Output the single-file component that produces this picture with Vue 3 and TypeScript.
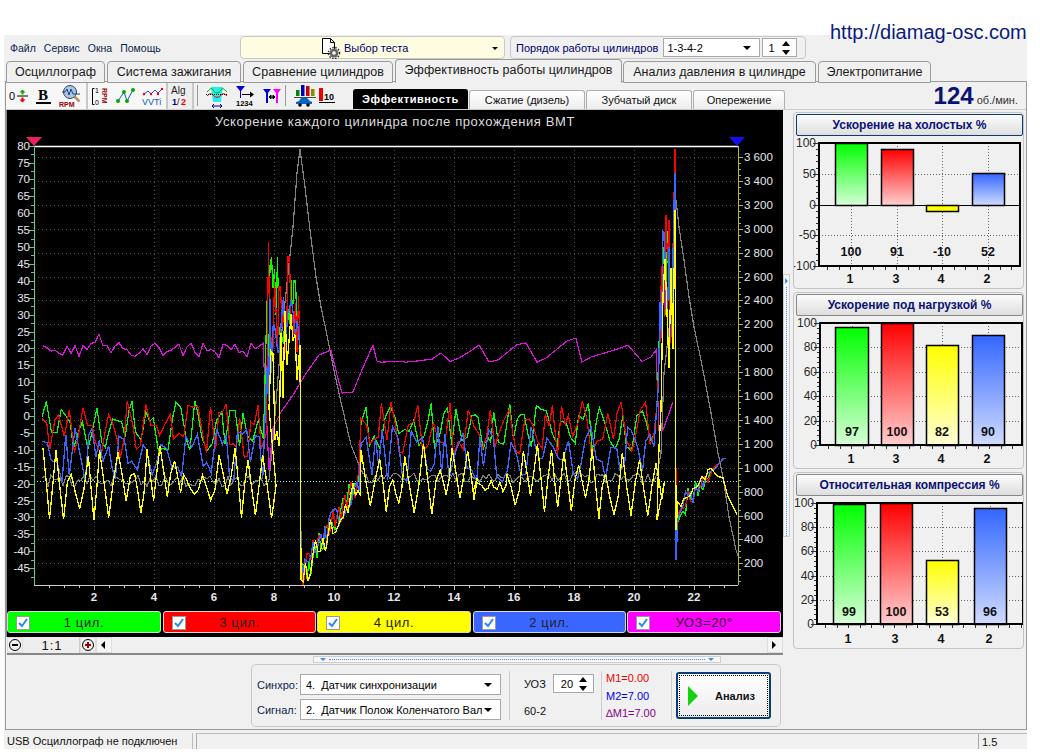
<template>
  <div class="app">
    <a class="url">http://diamag-osc.com</a>
    <div class="window">
      <div class="topbar">
        <div class="menu">
          <span v-for="m in menu" :key="m">{{ m }}</span>
        </div>
        <div class="test-select">
          <svg class="test-icon" width="22" height="22" viewBox="0 0 22 22">
            <path d="M2.500 1.500h8l4 4v11h-12z" fill="#fff" stroke="#000" />
            <path d="M10.500 1.500v4h4" fill="none" stroke="#000" />
            <circle cx="14" cy="16" r="4.500" fill="#666" />
            <circle cx="14" cy="16" r="5.600" fill="none" stroke="#333" stroke-width="1.400" stroke-dasharray="1.500 1.500" />
            <circle cx="14" cy="16" r="1.800" fill="#fff" />
          </svg>
          <span>Выбор теста</span>
          <i class="caret small"></i>
        </div>
        <div class="order">
          <span>Порядок работы цилиндров</span>
          <div class="combo order-combo">1-3-4-2<i class="caret"></i></div>
          <div class="combo spin-box">1
            <svg width="10" height="16" viewBox="0 0 10 16"><path d="M5 1l4 5H1zM5 15l4-5H1z" fill="#000" /></svg>
          </div>
        </div>
      </div>

      <div class="tabs">
        <div v-for="t in tabs" :key="t" class="tab" :class="{ active: t === activeTab }">{{ t }}</div>
      </div>

      <div class="content">
        <div class="toolbar">
          <div class="tool-group g1">
            <svg width="20" height="20" viewBox="0 0 20 20">
              <text x="0" y="14" class="ic-t" font-size="11" fill="#000">0</text>
              <path d="M8 10h11" stroke="#000" />
              <path d="M13.500 3.500l3 3h-2v2h-2v-2h-2z" fill="#0a0" />
              <path d="M13.500 16.500l3-3h-2v-2h-2v2h-2z" fill="#e00" />
            </svg>
            <svg width="20" height="20" viewBox="0 0 20 20">
              <text x="4" y="14" class="ic-b" font-size="15" fill="#000">B</text>
              <path d="M2 17h15" stroke="#000" stroke-width="2" />
            </svg>
            <svg width="24" height="24" viewBox="0 0 24 24">
              <circle cx="11" cy="8" r="6.500" fill="#a9c6e8" stroke="#345" />
              <path d="M3 8h3l2-3 2 6 2-6 2 5h7" fill="none" stroke="#247" />
              <path d="M15.500 12.500l5 5" stroke="#b8965a" stroke-width="2.500" />
              <text x="0" y="23" class="ic-t" font-size="7" fill="#900" font-weight="700">RPM</text>
            </svg>
          </div>
          <div class="tool-group g2">
            <svg width="20" height="24" viewBox="0 0 20 24">
              <path d="M4.500 4.500h-2v16h2" fill="none" stroke="#000" />
              <text x="5" y="9" class="ic-t" font-size="7" fill="#000">1</text>
              <text x="5" y="21" class="ic-t" font-size="7" fill="#000">0</text>
              <text x="0" y="0" transform="translate(12 4) rotate(90)" class="ic-t" font-size="7" fill="#900" font-weight="700">RPM</text>
            </svg>
            <svg width="22" height="20" viewBox="0 0 22 20">
              <path d="M3 15l6-9 3 9 6-11" fill="none" stroke="#15c" />
              <circle cx="3" cy="15" r="2" fill="#0a0" /><circle cx="9" cy="6" r="2" fill="#0a0" />
              <circle cx="12" cy="15" r="2" fill="#0a0" /><circle cx="18" cy="4" r="2" fill="#0a0" />
            </svg>
            <svg width="22" height="24" viewBox="0 0 22 24">
              <path d="M1 9l5-4 3 3 4-4 3 3 4-4" transform="translate(0 2)" fill="none" stroke="#15c" />
              <circle cx="2" cy="10" r="1.200" fill="#e00" /><circle cx="9" cy="10" r="1.200" fill="#e00" />
              <circle cx="16" cy="10" r="1.200" fill="#e00" /><circle cx="20" cy="5" r="1.200" fill="#e00" />
              <text x="0" y="21" class="ic-t" font-size="9" fill="#15c">VVTi</text>
            </svg>
          </div>
          <div class="tool-group g3">
            <svg width="20" height="26" viewBox="0 0 20 26">
              <text x="1" y="11" class="ic-t" font-size="10" fill="#222">Alg</text>
              <text x="2" y="22" class="ic-t" font-size="9" fill="#008" font-weight="700">1</text>
              <text x="7" y="22" class="ic-t" font-size="9" fill="#222">/</text>
              <text x="11" y="22" class="ic-t" font-size="9" fill="#e00" font-weight="700">2</text>
            </svg>
          </div>
          <i class="tool-sep"></i>
          <div class="tool-group g4">
            <svg width="22" height="24" viewBox="0 0 22 24">
              <path d="M5 3h12l-2 15H7z" fill="#2ee" />
              <path d="M1 8c3-3 4-5 6-2 2 4 6 4 8 0 1-3 3-1 6 2" fill="none" stroke="#0a0" />
              <path d="M1 12c3-3 4-3 6-1 2 3 6 3 8 0 2-2 3-2 6 1" fill="none" stroke="#e00" />
              <path d="M0 10.500h22" stroke="#000" stroke-dasharray="1 1" />
              <path d="M6 22h10M6 22l2-2M6 22l2 2M16 22l-2-2M16 22l-2 2" stroke="#008" fill="none" />
            </svg>
            <svg width="20" height="24" viewBox="0 0 20 24">
              <path d="M1 2h9L6 7v7H5V7z" fill="#00d" />
              <path d="M7 10.500h9" stroke="#000" /><path d="M19 10.500l-4-3v6z" fill="#000" />
              <text x="1" y="22" class="ic-t" font-size="7.500" fill="#000" font-weight="700">1234</text>
            </svg>
            <svg width="20" height="20" viewBox="0 0 20 20">
              <path d="M1 3h8L6 7v10H4V7z" fill="#00d" />
              <path d="M11 3h8l-3 4v10h-2V7z" fill="#f0f" />
              <path d="M7 11h6M7 11l2-2v4zM13 11l-2-2v4z" stroke="#000" fill="#000" />
            </svg>
          </div>
          <i class="tool-sep"></i>
          <div class="tool-group g5">
            <svg width="22" height="24" viewBox="0 0 22 24">
              <rect x="2" y="6" width="3.500" height="6" fill="#080" /><rect x="7" y="1" width="3.500" height="11" fill="#00b" />
              <rect x="12" y="2" width="3.500" height="10" fill="#c00" /><rect x="17" y="5" width="3.500" height="7" fill="#880" />
              <path d="M0 13.500h22" stroke="#444" />
              <path d="M2 20v-2l3-1 2-3h6l3 3 2 1v2z" fill="#06c" />
              <circle cx="6" cy="21" r="1.800" fill="#000" /><circle cx="14" cy="21" r="1.800" fill="#000" />
            </svg>
            <svg width="18" height="20" viewBox="0 0 18 20">
              <rect x="1" y="2" width="4" height="13" fill="#e00" />
              <path d="M1 16.500h16" stroke="#000" />
              <text x="6" y="14" class="ic-t" font-size="9" fill="#000" font-weight="700">10</text>
            </svg>
          </div>
          <div class="subtabs">
            <div v-for="s in subTabs" :key="s" class="subtab" :class="{ active: s === activeSub }">{{ s }}</div>
          </div>
          <div class="rpm"><b>124</b><span>об./мин.</span></div>
        </div>

        <div class="main">
          <div class="left">
            <div class="scope">
              <svg class="scope-svg" width="776" height="501" viewBox="6 110 776 501">
                <text x="394" y="126" text-anchor="middle" class="scope-title">Ускорение каждого цилиндра после прохождения ВМТ</text>
                <path v-for="g in hGrid" :key="'h' + g" :d="`M33 ${g}.5H737`" class="grid" />
                <path v-for="g in vGrid" :key="'v' + g" :d="`M${g}.5 146V585`" class="grid" />
                <path d="M33 481.500H737" stroke="#8ff" stroke-dasharray="1 2" />
                <polyline v-for="t in traces" :key="t.color" :points="t.points" :stroke="t.color" :stroke-width="t.width" fill="none" shape-rendering="crispEdges" />
                <path d="M33 146.500H737" stroke="#fff" stroke-width="1.500" />
                <path d="M33 585.500H737" stroke="#ccc" />
                <path d="M33.500 146V585" stroke="#5cc8a8" />
                <path d="M737.500 146V585" stroke="#b8b83c" />
                <path d="M25 137h16l-8 9z" fill="#ee1f60" />
                <path d="M728 137h16l-8 9z" fill="#1010f0" />
                <g v-for="l in leftAxis" :key="'l' + l.label">
                  <path :d="`M28 ${l.y}.5h5`" stroke="#5cc8a8" />
                  <text x="29" :y="l.y + 4" text-anchor="end" class="axis-t">{{ l.label }}</text>
                </g>
                <path v-for="m in leftMinor" :key="'lm' + m" :d="`M30 ${m}.5h3`" stroke="#5cc8a8" />
                <g v-for="r in rightAxis" :key="'r' + r.label">
                  <path :d="`M737 ${r.y}.5h5`" stroke="#b8b83c" />
                  <text x="743" :y="r.y + 4" class="axis-t">{{ r.label }}</text>
                </g>
                <path v-for="m in rightMinor" :key="'rm' + m" :d="`M737 ${m}.5h3`" stroke="#b8b83c" />
                <g v-for="b in bottomAxis" :key="'b' + b.label">
                  <path :d="`M${b.x}.5 585v5`" stroke="#ccc" />
                  <text :x="b.x" y="601" text-anchor="middle" class="axis-t bold">{{ b.label }}</text>
                </g>
                <path v-for="m in bottomMinor" :key="'bm' + m" :d="`M${m}.5 585v3`" stroke="#ccc" />
              </svg>
              <div class="legend">
                <div v-for="c in legend" :key="c.label" class="legend-item" :class="c.cls">
                  <span class="check">
                    <svg width="10" height="10" viewBox="0 0 10 10"><path d="M1 5l3 3 5-7" fill="none" stroke="#2b8ae8" stroke-width="2" /></svg>
                  </span>
                  <span class="legend-label">{{ c.label }}</span>
                </div>
              </div>
            </div>
            <div class="scrollrow">
              <span class="round-btn"><i class="minus"></i></span>
              <span class="ratio">1:1</span>
              <span class="round-btn"><i class="plus"></i></span>
              <span class="sb-btn"><i class="tri-l"></i></span>
              <span class="sb-track"></span>
              <span class="sb-btn"><i class="tri-r"></i></span>
            </div>
            <div class="h-strip">
              <i class="strip-arrow"></i><span class="dots"></span><i class="strip-arrow"></i>
            </div>
            <div class="controls">
              <div class="signals">
                <div class="sig-row">
                  <label>Синхро:</label>
                  <div class="combo sig-combo">4.&nbsp; Датчик синхронизации<i class="caret"></i></div>
                </div>
                <div class="sig-row">
                  <label>Сигнал:</label>
                  <div class="combo sig-combo">2.&nbsp; Датчик Полож Коленчатого Вал<i class="caret"></i></div>
                </div>
              </div>
              <div class="uoz">
                <div class="uoz-row">
                  <span>УОЗ</span>
                  <div class="combo uoz-spin">20
                    <svg width="10" height="14" viewBox="0 0 10 14"><path d="M5 0l4 5H1zM5 14l4-5H1z" fill="#000" /></svg>
                  </div>
                </div>
                <span class="gear">60-2</span>
              </div>
              <div class="marks">
                <span class="m1">M1=0.00</span>
                <span class="m2">M2=7.00</span>
                <span class="m3">∆M1=7.00</span>
              </div>
              <div class="analyze">
                <svg width="12" height="20" viewBox="0 0 12 20"><path d="M1 0l10 10L1 20z" fill="#14d114" /></svg>
                <b>Анализ</b>
              </div>
            </div>
          </div>

          <div class="v-strip"><i class="strip-arrow-r"></i><span class="v-dots"></span></div>

          <div class="right">
            <section v-for="p in panels" :key="p.title" class="panel">
              <div class="panel-head" :class="{ focus: p.focus }">{{ p.title }}</div>
              <svg width="231" height="151" viewBox="0 0 231 151">
                <defs>
                  <linearGradient v-for="b in p.bars" :id="gradId(p.id, b.name)" :key="b.name" x1="0" y1="0" x2="0" y2="1">
                    <stop offset="0" :stop-color="b.color" />
                    <stop offset="1" :stop-color="b.pale" />
                  </linearGradient>
                </defs>
                <path v-for="t in p.ticks" :key="'g' + t.y" :d="`M${p.x0} ${t.y}.5H${p.x1}`" :stroke="t.zero ? '#000' : '#666'" :stroke-dasharray="t.zero ? undefined : '1 2'" />
                <path v-for="b in p.bars" :key="'v' + b.name" :d="`M${b.cx}.5 ${p.y0}V${p.y1}`" stroke="#666" stroke-dasharray="1 2" />
                <rect v-for="b in p.bars" :key="'r' + b.name" :x="b.x + 0.5" :y="b.y + 0.5" :width="b.w" :height="b.h" :fill="`url(#${gradId(p.id, b.name)})`" stroke="#000" stroke-width="1.500" />
                <path v-for="t in p.ticks" :key="'t' + t.y" :d="`M${p.x0 - 6} ${t.y}.5h6`" stroke="#333" />
                <path v-for="m in p.minor" :key="'m' + m" :d="`M${p.x0 - 3} ${m}.5h3`" stroke="#333" />
                <path v-for="m in p.bottomTicks" :key="'bt' + m" :d="`M${m}.5 ${p.y1}v4`" stroke="#333" />
                <rect :x="p.x0" :y="p.y0" :width="p.x1 - p.x0" :height="p.y1 - p.y0" fill="none" stroke="#000" stroke-width="2" />
                <text v-for="t in p.ticks" :key="'l' + t.y" :x="p.x0 - 3" :y="t.y + 4" text-anchor="end" class="bar-axis">{{ t.label }}</text>
                <text v-for="b in p.bars" :key="'n' + b.name" :x="b.cx" :y="p.valueY" text-anchor="middle" class="bar-val">{{ b.value }}</text>
                <text v-for="b in p.bars" :key="'c' + b.name" :x="b.cx - 1" :y="p.nameY" text-anchor="middle" class="bar-val">{{ b.name }}</text>
              </svg>
            </section>
          </div>
        </div>
      </div>

      <div class="status">
        <span class="s1">USB Осциллограф не подключен</span>
        <span class="s2"></span>
        <span class="s3">1.5</span>
      </div>
    </div>
  </div>
</template>

<script setup lang="ts">
const menu = ['Файл', 'Сервис', 'Окна', 'Помощь']
const tabs = [
  'Осциллограф',
  'Система зажигания',
  'Сравнение цилиндров',
  'Эффективность работы цилиндров',
  'Анализ давления в цилиндре',
  'Электропитание'
]
const activeTab = tabs[3]
const subTabs = ['Эффективность', 'Сжатие (дизель)', 'Зубчатый диск', 'Опережение']
const activeSub = subTabs[0]

const legend = [
  { label: '1 цил.', cls: 'green' },
  { label: '3 цил.', cls: 'red' },
  { label: '4 цил.', cls: 'yellow' },
  { label: '2 цил.', cls: 'blue' },
  { label: 'УОЗ=20°', cls: 'magenta' }
]

// оси осциллограммы, в пикселях страницы
const yLeft = (v: number) => 416 - v * 3.38
const yRight = (v: number) => Math.round(157 + ((3600 - v) / 200) * 23.9)
const xAt = (t: number) => Math.round(33 + t * 30)

const leftAxis: { label: string; y: number }[] = []
const leftMinor: number[] = []
for (let v = 80; v >= -45; v -= 5) {
  leftAxis.push({ label: String(v), y: Math.round(yLeft(v)) })
  leftMinor.push(Math.round(yLeft(v - 2.5)))
}
const rightAxis: { label: string; y: number }[] = []
const rightMinor: number[] = []
for (let v = 3600; v >= 200; v -= 200) {
  const s = String(v)
  rightAxis.push({ label: v >= 1000 ? `${s[0]} ${s.slice(1)}` : s, y: yRight(v) })
  for (const d of [50, 100, 150]) rightMinor.push(yRight(v - d))
}
const hGrid = rightAxis.map((r) => r.y)
const bottomAxis: { label: string; x: number }[] = []
for (let t = 2; t <= 22; t += 2) bottomAxis.push({ label: String(t), x: xAt(t) })
const vGrid = bottomAxis.map((b) => b.x)
const bottomMinor: number[] = []
for (let t = 0.5; t < 23.5; t += 0.5) if (t % 2 !== 0) bottomMinor.push(xAt(t))

// псевдослучайный сигнал, чтобы кривая всегда была одной и той же
function rng(seed: number) {
  let s = seed
  return () => {
    s = (s * 1664525 + 1013904223) % 4294967296
    return s / 4294967296
  }
}

type Pt = [number, number]

const toPoints = (pts: Pt[]) => pts.map((p) => `${p[0].toFixed(1)},${p[1].toFixed(1)}`).join(' ')

// зигзаг вокруг базовой линии: неровные пики через 10-25 px
function baseline(r: () => number, pts: Pt[], from: number, to: number, base: number, amp: number) {
  let sign = 1
  let left = 2
  for (let x = from; x < to; x += 3 + r() * 3) {
    pts.push([x, yLeft(base + sign * amp * (0.1 + 0.9 * r()))])
    if (--left === 0) {
      sign = -sign
      left = 1 + Math.floor(r() * 3)
    }
  }
}

function cylinder(seed: number, base: number, amp: number, peak1: number, peak2: number, dip: number): string {
  const r = rng(seed)
  const pts: Pt[] = []
  baseline(r, pts, 41, 266, base, amp)
  for (let x = 266; x < 298; x += 1.5) {
    const low = x < 271 ? 0 : 18
    pts.push([x, yLeft(low + r() * (peak1 - low))])
  }
  pts.push([299, 350], [300, 560])
  for (let x = 302; x < 360; x += 2) {
    const up = (x - 302) / 58
    pts.push([x, 572 - up * 95 + (r() - 0.5) * (36 - up * 12)])
  }
  baseline(r, pts, 360, 656, base, amp)
  for (let x = 656; x < 673; x += 1.5) {
    const up = Math.min(1, (x - 656) / 5)
    pts.push([x, 405 - up * 60 - r() * up * 130])
  }
  pts.push([674, yLeft(peak2)], [675, dip])
  for (let x = 677; x < 726; x += 2.5) {
    const up = Math.min(1, (x - 677) / 46)
    pts.push([x, 512 - up * 54 + (r() - 0.5) * 34 * (1 - up) + (r() - 0.5) * 2])
  }
  return toPoints(pts)
}

function yellowTrace(): string {
  const r = rng(44)
  const pts: Pt[] = []
  const zigzag = (from: number, to: number) => {
    let x = from
    while (x < to) {
      const len = 11 + r() * 8
      const top = yLeft(-6 - r() * 13)
      const bottom = yLeft(-22 - r() * 9)
      pts.push([x, top], [x + len * 0.25, (top + bottom) / 2 + (r() - 0.5) * 6], [x + len * 0.5, bottom], [x + len * 0.75, (top + bottom) / 2 + (r() - 0.5) * 6])
      x += len
    }
  }
  zigzag(42, 268)
  for (let x = 268; x < 298; x += 2) pts.push([x, yLeft(r() * 30 + (x < 280 ? -10 : 5))])
  pts.push([299, 345], [300, 580])
  for (let x = 302; x < 360; x += 2.5) pts.push([x, 575 - ((x - 302) / 58) * 95 + (r() - 0.5) * 30])
  zigzag(360, 472)
  for (let x = 472; x < 506; x += 3) pts.push([x, 480 + r() * 12])
  zigzag(506, 656)
  for (let x = 656; x < 673; x += 2) pts.push([x, 520 - Math.min(1, (x - 656) / 6) * 270 * (0.5 + r() * 0.5)])
  pts.push([674, 210], [675, 530])
  for (let x = 677; x < 712; x += 3) pts.push([x, 508 - ((x - 677) / 35) * 44 + (r() - 0.5) * 14])
  pts.push([716, 476], [722, 478], [727, 497], [733, 508], [736, 515])
  return toPoints(pts)
}

function grayTrace(): string {
  const r = rng(9)
  const pts: Pt[] = []
  for (let x = 41; x < 266; x += 3) pts.push([x, 481 + (r() - 0.5) * 12])
  pts.push([268, 480], [272, 440], [280, 340], [292, 227], [296, 173], [299, 149])
  pts.push([304, 187], [309, 230], [315, 277], [320, 307], [327, 340], [334, 375], [340, 402], [350, 445], [360, 470])
  for (let x = 362; x < 658; x += 3) pts.push([x, 478 + (r() - 0.5) * 10])
  pts.push([660, 453], [663, 373], [668, 330], [675, 200], [678, 227], [683, 260], [688, 297], [693, 327], [702, 370], [710, 413], [717, 453], [722, 477], [728, 517], [735, 550], [737, 556])
  return toPoints(pts)
}

function magentaTrace(): string {
  const r = rng(23)
  const pts: Pt[] = []
  for (let x = 42; x < 266; x += 4) pts.push([x, 350 + (r() - 0.5) * 16 + (x > 90 && x < 100 ? -12 : 0)])
  pts.push([268, 470], [272, 428], [280, 412], [292, 395], [304, 375], [318, 355], [330, 350], [336, 375], [341, 393], [352, 392], [360, 372], [372, 345], [376, 361])
  for (let x = 380; x < 420; x += 5) pts.push([x, 362 + (r() - 0.5) * 2])
  const anchors: Pt[] = [[440, 353], [458, 358], [478, 345], [497, 360], [525, 343], [545, 358], [575, 338], [590, 357], [627, 345], [650, 357]]
  for (const a of anchors) pts.push([a[0] - 9, a[1] + 4 + (r() - 0.5) * 5], a)
  pts.push([655, 350], [658, 430], [662, 430], [672, 402])
  return toPoints(pts)
}

const traces = [
  { color: '#808080', width: 1.200, points: grayTrace() },
  { color: '#e010e0', width: 1.200, points: magentaTrace() },
  { color: '#00ff00', width: 1.200, points: cylinder(101, -3, 7.500, 49, 69, 505) },
  { color: '#ff0000', width: 1.200, points: cylinder(202, -4, 8.500, 52, 79, 500) },
  { color: '#3a66ff', width: 1.300, points: cylinder(303, -11, 8.500, 36, 72, 560) },
  { color: '#ffff00', width: 1.300, points: yellowTrace() }
]

// панели справа
interface BarIn { name: string; value: number; x: number; w: number }

const palette: Record<string, { color: string; pale: string }> = {
  '1': { color: '#00ff00', pale: '#d8ffd8' },
  '3': { color: '#ff0000', pale: '#ffd0d0' },
  '4': { color: '#ffff00', pale: '#ffffd8' },
  '2': { color: '#3366ff', pale: '#d0dcff' }
}

function makePanel(id: string, title: string, focus: boolean, cfg: {
  x0: number; x1: number; y0: number; y1: number; min: number; max: number; step: number;
  valueY: number; nameY: number; bars: BarIn[]
}) {
  const toY = (v: number) => cfg.y0 + ((cfg.max - v) / (cfg.max - cfg.min)) * (cfg.y1 - cfg.y0)
  const ticks: { y: number; label: number; zero: boolean }[] = []
  const minor: number[] = []
  for (let v = cfg.max; v >= cfg.min; v -= cfg.step) {
    ticks.push({ y: Math.round(toY(v)), label: v, zero: v === 0 && cfg.min < 0 })
    if (v > cfg.min) for (let k = 1; k < 5; k++) minor.push(Math.round(toY(v - (cfg.step * k) / 5)))
  }
  const bottomTicks: number[] = []
  for (let x = cfg.x0 + 8; x < cfg.x1; x += 11.5) bottomTicks.push(Math.round(x))
  const bars = cfg.bars.map((b) => {
    const top = toY(Math.min(100, Math.max(b.value, 0)))
    const bot = toY(b.value < 0 ? b.value : 0)
    return {
      ...b,
      ...palette[b.name],
      ...(b.value < 0 ? { pale: palette[b.name].color } : {}),
      cx: b.x + Math.round(b.w / 2),
      y: Math.round(top),
      h: Math.round(bot - top)
    }
  })
  return { id, title, focus, ...cfg, ticks, minor, bottomTicks, bars }
}

const panels = [
  makePanel('a', 'Ускорение на холостых %', true, {
    x0: 26, x1: 227, y0: 6, y1: 129, min: -100, max: 100, step: 50, valueY: 119, nameY: 146,
    bars: [
      { name: '1', value: 100, x: 42, w: 32 },
      { name: '3', value: 91, x: 88, w: 32 },
      { name: '4', value: -10, x: 133, w: 32 },
      { name: '2', value: 52, x: 179, w: 32 }
    ]
  }),
  makePanel('b', 'Ускорение под нагрузкой %', false, {
    x0: 27, x1: 229, y0: 6, y1: 128, min: 0, max: 100, step: 20, valueY: 119, nameY: 146,
    bars: [
      { name: '1', value: 97, x: 42, w: 33 },
      { name: '3', value: 100, x: 88, w: 32 },
      { name: '4', value: 82, x: 133, w: 32 },
      { name: '2', value: 90, x: 179, w: 32 }
    ]
  }),
  makePanel('c', 'Относительная компрессия %', false, {
    x0: 24, x1: 230, y0: 6, y1: 127, min: 0, max: 100, step: 20, valueY: 119, nameY: 146,
    bars: [
      { name: '1', value: 99, x: 40, w: 32 },
      { name: '3', value: 100, x: 87, w: 32 },
      { name: '4', value: 53, x: 133, w: 32 },
      { name: '2', value: 96, x: 181, w: 32 }
    ]
  })
]

const gradId = (panel: string, name: string) => `bar-${panel}-${name}`
</script>

<style>
html,
body {
  margin: 0;
  background: #fff;
  overflow: hidden;
}
</style>

<style scoped>
.app {
  position: relative;
  width: 1040px;
  height: 754px;
  padding: 35px 0 0 4px;
  box-sizing: border-box;
  background: #fff;
  font-family: "Liberation Sans", Arial, sans-serif;
  font-size: 11px;
  color: #000;
}

.url {
  position: absolute;
  left: 830px;
  top: 21px;
  font-size: 20px;
  color: #0a1a80;
}

.window {
  width: 1023px;
  height: 714px;
  background: #f0f0f0;
}

.topbar {
  display: flex;
  height: 24px;
  align-items: flex-start;
}

.menu {
  width: 236px;
  display: flex;
  gap: 8px;
  padding: 7px 0 0 6px;
  box-sizing: border-box;
  font-size: 10.500px;
  color: #0b1f4e;
}

.test-select {
  position: relative;
  width: 265px;
  height: 23px;
  margin-top: 1px;
  display: flex;
  align-items: center;
  padding-left: 79px;
  box-sizing: border-box;
  gap: 2px;
  background: #fffde1;
  border: 1px solid #c8c8c8;
  border-radius: 4px;
  color: #00006e;
}

.test-icon {
  flex: none;
}

.order {
  width: 296px;
  height: 23px;
  margin: 1px 0 0 5px;
  display: flex;
  align-items: center;
  gap: 5px;
  padding-left: 5px;
  box-sizing: border-box;
  border: 1px solid #c8c8c8;
  border-radius: 4px;
  color: #00006e;
}

.combo {
  position: relative;
  height: 19px;
  display: flex;
  align-items: center;
  padding-left: 3px;
  box-sizing: border-box;
  background: #fff;
  border: 1px solid #a8a8a8;
  color: #000;
  white-space: nowrap;
  overflow: hidden;
}

.caret {
  position: absolute;
  right: 8px;
  top: 50%;
  margin-top: -2px;
  width: 0;
  height: 0;
  border-left: 4px solid transparent;
  border-right: 4px solid transparent;
  border-top: 4px solid #000;
}

.caret.small {
  right: 6px;
  margin-top: -1px;
  border-width: 3px 3px 0;
}

.order-combo {
  width: 97px;
}

.spin-box {
  width: 35px;
  margin-left: -3px;
  justify-content: space-between;
  padding: 0 5px;
}

.tabs {
  display: grid;
  grid-template-columns: 99px 134px 150px 226px 193px 113px;
  padding-left: 2px;
  column-gap: 2px;
  height: 23px;
  align-items: end;
  position: relative;
  z-index: 1;
  margin-bottom: -1px;
}

.tab {
  height: 20px;
  line-height: 20px;
  text-align: center;
  font-size: 12.500px;
  letter-spacing: 0.050px;
  color: #1a1a1a;
  background: #f0f0f0;
  border: 1px solid #9a9a9a;
  border-radius: 4px 4px 0 0;
  box-sizing: content-box;
  white-space: nowrap;
}

.tab.active {
  height: 22px;
  line-height: 20px;
  margin-right: -1px;
  border-bottom-color: #f0f0f0;
}

.content {
  width: 1022px;
  height: 649px;
  margin-left: 1px;
  border: 1px solid #9a9a9a;
  box-sizing: border-box;
}

.toolbar {
  position: relative;
  display: flex;
  height: 28px;
  align-items: stretch;
  border-bottom: 1px solid #ccc;
  box-sizing: border-box;
}

.tool-group {
  display: flex;
  align-items: center;
  justify-content: space-around;
  box-sizing: border-box;
  background: #f7f7f7;
  border-right: 2px solid #c8c8c8;
}

.g1 { width: 82px; }
.g2 { width: 80px; }
.g3 { width: 26px; background: #eee; }
.g4 { width: 87px; background: transparent; border: 0; padding-left: 5px; }
.g5 { width: 67px; background: transparent; border: 0; padding: 0 16px 0 7px; }

.tool-sep {
  width: 1px;
  margin: 3px 0;
  background: #999;
}

.tool-sep:first-of-type {
  margin-left: 3px;
}

.ic-t {
  font-family: "Liberation Sans", sans-serif;
}

.ic-b {
  font-family: "Liberation Serif", serif;
  font-weight: 700;
}

.subtabs {
  display: grid;
  grid-template-columns: 115px 116px 106px 92px;
  column-gap: 1px;
  align-items: end;
}

.subtab {
  height: 18px;
  line-height: 19px;
  text-align: center;
  font-size: 11px;
  background: linear-gradient(#fff, #eee);
  border: 1px solid #b0b0b0;
  border-bottom: 0;
  border-radius: 3px 3px 0 0;
  color: #111;
}

.subtab.active {
  height: 19px;
  background: #000;
  color: #fff;
  font-weight: 700;
  letter-spacing: 0.600px;
  border-color: #000;
}

.rpm {
  position: absolute;
  right: 8px;
  top: 1px;
  display: flex;
  align-items: baseline;
  gap: 3px;
  color: #333;
}

.rpm b {
  font-size: 24px;
  line-height: 26px;
  color: #0a1275;
}

.main {
  display: flex;
  height: 619px;
}

.left {
  width: 777px;
}

.scope {
  width: 776px;
  height: 527px;
  background: #000;
  border-left: 1px solid #888;
  box-sizing: content-box;
}

.scope-svg {
  display: block;
}

.scope-title {
  font-size: 13px;
  letter-spacing: 0.600px;
  fill: #ddd;
}

.grid {
  stroke: #555;
  stroke-dasharray: 1 3;
}

.axis-t {
  font-size: 11.500px;
  fill: #e6e8f0;
}

.axis-t.bold {
  font-weight: 700;
}

.legend {
  display: grid;
  grid-template-columns: 156px 154px 156px 154px 154px;
  height: 22px;
}

.legend-item {
  position: relative;
  display: flex;
  align-items: center;
  justify-content: center;
  margin-right: 1px;
  border: 1px solid #d8d8d8;
  border-radius: 3px;
  font-size: 13px;
  letter-spacing: 0.600px;
  color: #222;
}

.legend-item:nth-child(odd) {
  margin-right: 2px;
}

.legend-item:last-child {
  margin-right: 0;
}

.green { background: #00ff00; }
.red { background: #ff0000; }
.yellow { background: #ffff00; }
.blue { background: #3a66ff; }
.magenta { background: #ff00ff; }

.check {
  position: absolute;
  left: 8px;
  top: 4px;
  width: 12px;
  height: 12px;
  display: flex;
  align-items: center;
  justify-content: center;
  background: #fff;
  border: 1px solid #999;
}

.scrollrow {
  display: flex;
  width: 776px;
  height: 16px;
  margin-left: 1px;
  align-items: stretch;
  border-bottom: 2px solid #888;
  box-sizing: content-box;
  background: #f0f0f0;
}

.round-btn {
  position: relative;
  width: 16px;
  flex: none;
  border: 1px solid #ddd;
  box-sizing: border-box;
}

.minus,
.plus {
  position: absolute;
  left: 1px;
  top: 1px;
  width: 12px;
  height: 12px;
  border: 1px solid #000;
  border-radius: 50%;
  box-sizing: border-box;
}

.minus::after,
.plus::after {
  content: "";
  position: absolute;
  left: 2px;
  top: 4px;
  width: 6px;
  height: 2px;
  background: #000;
}

.plus::after {
  background: #900;
}

.plus::before {
  content: "";
  position: absolute;
  left: 4px;
  top: 2px;
  width: 2px;
  height: 6px;
  background: #900;
}

.ratio {
  width: 57px;
  flex: none;
  padding-left: 2px;
  text-align: center;
  font-size: 13px;
  letter-spacing: 1px;
  line-height: 18px;
  color: #111;
  background: #eee;
  border-right: 1px solid #ccc;
  box-sizing: border-box;
}

.sb-btn {
  position: relative;
  width: 16px;
  flex: none;
  background: #f4f4f4;
  border: 1px solid #ddd;
  box-sizing: border-box;
}

.tri-l,
.tri-r {
  position: absolute;
  top: 3px;
  left: 4px;
  border-top: 4px solid transparent;
  border-bottom: 4px solid transparent;
}

.tri-l { border-right: 4px solid #000; }
.tri-r { border-left: 4px solid #000; }

.sb-track {
  flex: 1;
  background: #f0f0f0;
}

.h-strip {
  display: flex;
  align-items: center;
  gap: 3px;
  width: 408px;
  height: 7px;
  margin: 1px 0 1px 307px;
  padding: 0 6px;
  box-sizing: border-box;
  background: #f6f6f6;
  border: 1px solid #ccc;
}

.strip-arrow {
  width: 0;
  height: 0;
  border-left: 3px solid transparent;
  border-right: 3px solid transparent;
  border-top: 3px solid #3b8fe8;
}

.dots {
  flex: 1;
  border-top: 1px dotted #3b8fe8;
}

.controls {
  display: flex;
  width: 530px;
  height: 63px;
  margin-left: 245px;
  align-items: center;
  box-sizing: border-box;
  border: 1px solid #c8c8c8;
  border-radius: 5px;
  color: #111;
}

.signals {
  width: 258px;
  height: 49px;
  display: flex;
  flex-direction: column;
  justify-content: flex-end;
  gap: 4px;
  padding: 0 0 0 5px;
  box-sizing: border-box;
  border-right: 1px solid #ccc;
}

.sig-row {
  display: flex;
  align-items: center;
}

.sig-row label {
  width: 43px;
  color: #0b1f4e;
}

.sig-combo {
  width: 201px;
  height: 21px;
  padding-left: 5px;
}

.uoz {
  width: 92px;
  height: 49px;
  display: flex;
  flex-direction: column;
  justify-content: space-between;
  padding: 3px 0 3px 14px;
  box-sizing: border-box;
  border-right: 1px solid #ccc;
}

.uoz-row {
  display: flex;
  align-items: center;
  gap: 7px;
}

.uoz-spin {
  width: 41px;
  justify-content: space-between;
  padding: 0 5px 0 7px;
}

.marks {
  width: 70px;
  height: 49px;
  display: flex;
  flex-direction: column;
  justify-content: space-between;
  padding: 1px 0 1px 4px;
  box-sizing: border-box;
  border-right: 1px solid #ccc;
  font-size: 11px;
}

.m1 { color: #e00; }
.m2 { color: #00e; }
.m3 { color: #808; }

.analyze {
  width: 95px;
  height: 47px;
  margin-left: 4px;
  display: flex;
  align-items: center;
  gap: 16px;
  padding-left: 9px;
  box-sizing: border-box;
  background: linear-gradient(#fff, #ececec);
  border: 2px solid #0a3d73;
  border-radius: 3px;
  outline: 1px dotted #000;
  outline-offset: -4px;
}

.v-strip {
  width: 7px;
  height: 263px;
  margin: 164px 0 0 0;
  display: flex;
  flex-direction: column;
  align-items: center;
  gap: 3px;
  padding-top: 3px;
  box-sizing: border-box;
  background: #f6f6f6;
  border: 1px solid #ccc;
}

.strip-arrow-r {
  width: 0;
  height: 0;
  border-top: 3px solid transparent;
  border-bottom: 3px solid transparent;
  border-left: 3px solid #3b8fe8;
}

.v-dots {
  flex: 1;
  border-left: 1px dotted #3b8fe8;
}

.right {
  margin: 2px 0 0 3px;
  display: flex;
  flex-direction: column;
  gap: 3px;
}

.panel {
  width: 231px;
  height: 177px;
  box-sizing: border-box;
  border: 1px solid #c4c4c4;
  border-radius: 4px;
  overflow: hidden;
}

.panel svg {
  display: block;
  margin: 1px 0 0 -1px;
}

.panel-head {
  width: 227px;
  height: 22px;
  margin: 1px 0 0 2px;
  line-height: 21px;
  text-align: center;
  font-size: 12px;
  font-weight: 700;
  color: #0a1275;
  background: linear-gradient(#fcfcfc, #dedede);
  border: 1px solid #888;
  border-radius: 2px;
  box-sizing: border-box;
}

.panel-head.focus {
  border-color: #0a3d73;
}

.bar-axis {
  font-size: 12px;
  fill: #2a2a2a;
}

.bar-val {
  font-size: 12.500px;
  font-weight: 700;
  fill: #111;
}

.status {
  display: flex;
  height: 16px;
  margin-top: 3px;
  line-height: 16px;
  color: #111;
}

.s1 {
  width: 189px;
  padding-left: 3px;
  box-sizing: border-box;
  border-right: 1px solid #bbb;
}

.s2 {
  width: 782px;
  margin-left: 3px;
  border-left: 1px solid #aaa;
  border-top: 1px solid #bbb;
  box-sizing: border-box;
}

.s3 {
  flex: 1;
  padding-left: 3px;
  border-left: 1px solid #aaa;
  border-top: 1px solid #bbb;
}
</style>
